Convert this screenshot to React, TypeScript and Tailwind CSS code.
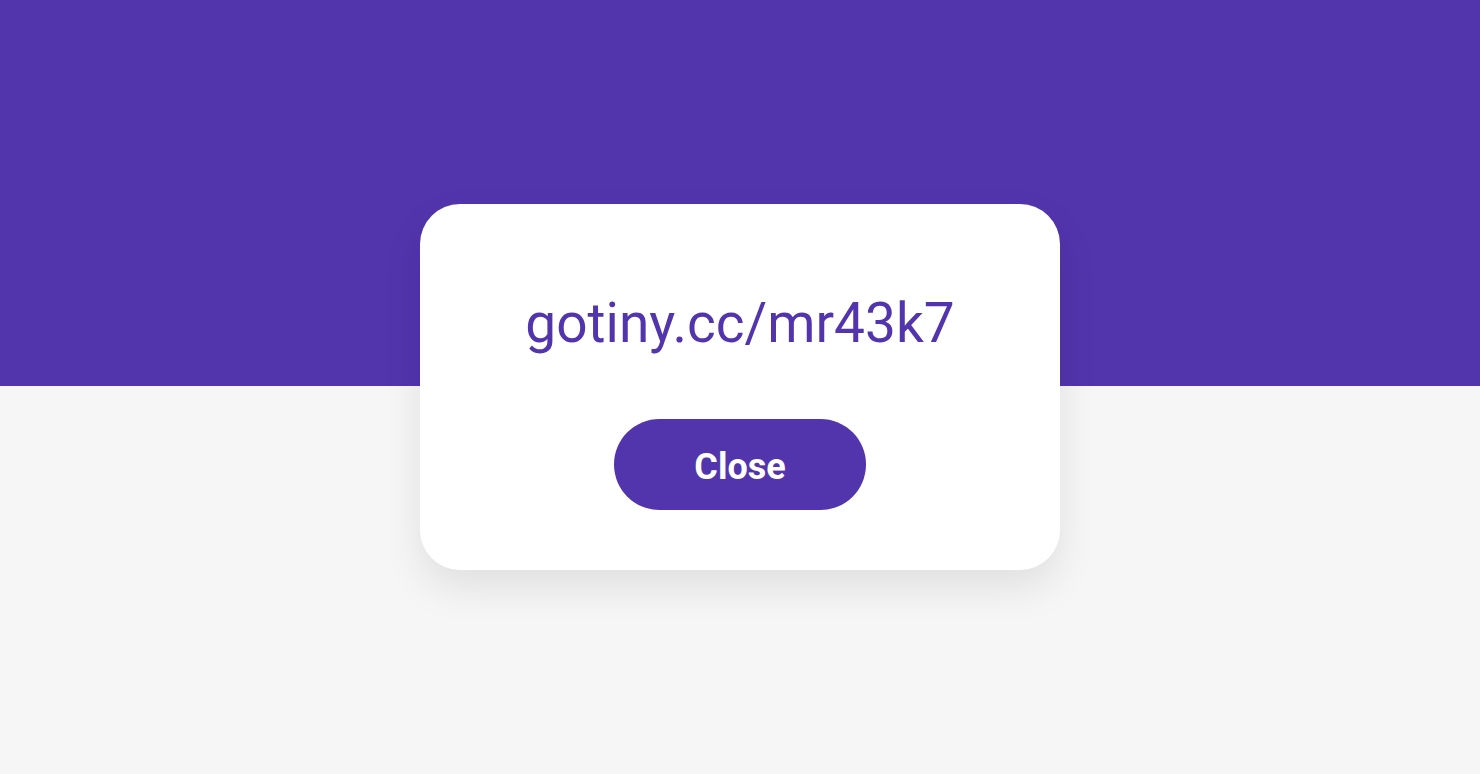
export default function App() {
  return (
    <div className="relative flex h-screen w-full flex-col bg-[#f6f6f6] font-['Roboto',sans-serif]">
      <div className="h-[386px] w-full bg-[#5234ad]"></div>
      <div className="flex-1"></div>

      <div className="absolute inset-0 flex items-center justify-center">
        <div className="flex h-[366px] w-[640px] flex-col items-center rounded-[40px] bg-white pt-[87px] shadow-[0_18px_40px_rgba(0,0,0,0.09)]">
          <p className="text-[55px] leading-[64px] text-[#5234ad]">gotiny.cc/mr43k7</p>
          <button className="mt-[64px] flex h-[91px] w-[252px] items-center justify-center rounded-full bg-[#5234ad] pt-[4px] text-[36px] font-bold text-white">
            Close
          </button>
        </div>
      </div>
    </div>
  );
}
